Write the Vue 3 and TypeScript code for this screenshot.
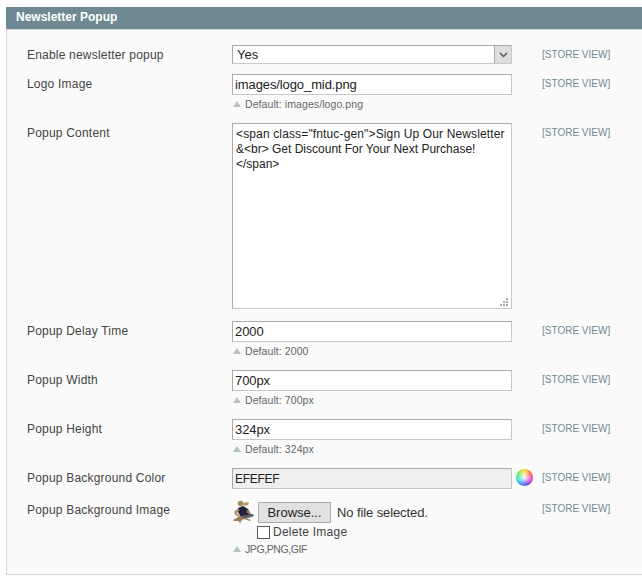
<template>
  <div class="page">
    <section class="panel">
      <h2 class="panel-head">Newsletter Popup</h2>
      <div class="panel-body">
        <div v-for="row in rows" :key="row.label" class="row">
          <label class="row-label">{{ row.label }}</label>
          <div class="row-value">
            <div v-if="row.kind === 'select'" class="select">
              <span>{{ row.value }}</span>
              <span class="select-arrow">
                <svg width="9" height="6" viewBox="0 0 9 6"><path d="M1 1l3.5 3.5L8 1" fill="none" stroke="#555" stroke-width="1.5" /></svg>
              </span>
            </div>
            <div v-else-if="row.kind === 'area'" class="textarea">
              <div class="first-line">&lt;span class="fntuc-gen"&gt;Sign Up Our Newsletter</div>
              <div>&amp;&lt;br&gt; Get Discount For Your Next Purchase!</div>
              <div>&lt;/span&gt;</div>
              <svg class="grip" width="9" height="9" viewBox="0 0 9 9" fill="#aaa">
                <rect x="6" y="0" width="2" height="2" /><rect x="3" y="3" width="2" height="2" /><rect x="6" y="3" width="2" height="2" />
                <rect x="0" y="6" width="2" height="2" /><rect x="3" y="6" width="2" height="2" /><rect x="6" y="6" width="2" height="2" />
              </svg>
            </div>
            <div v-else-if="row.kind === 'color'" class="color-line">
              <div class="input input-grey">{{ row.value }}</div>
              <span class="wheel"></span>
            </div>
            <div v-else-if="row.kind === 'file'" class="file">
              <div class="file-line">
                <svg class="thumb" width="23" height="24" viewBox="0 0 23 24">
                  <path d="M11 3l5-1 1 1-1 2-4 1z" fill="#b89a72" />
                  <circle cx="8.5" cy="3.5" r="2.8" fill="#a98b63" />
                  <path d="M6 8l5-2 5 3 2 6-9 2-3-5z" fill="#1f2338" />
                  <path d="M6 8L2 12l1 3 4 2 1-1.5-3-2.5 2.5-3z" fill="#b89a72" />
                  <path d="M16 9l3 5 2 1-2 1-5-4z" fill="#8a7355" />
                  <path d="M8 16l13-2 1 2-9 3z" fill="#5a5d68" />
                  <path d="M1 20l7-4 5 2 6 2-1 1-6-2-3 2-1 3-1-3-5 0z" fill="#9a7c56" />
                </svg>
                <button class="browse" type="button">Browse...</button>
                <span class="no-file">No file selected.</span>
              </div>
              <div class="delete-line"><span class="check"></span>Delete Image</div>
            </div>
            <div v-else class="input">{{ row.value }}</div>
            <p v-if="row.note" class="note" :class="{ 'note-types': row.kind === 'file' }"><span class="tri"></span>{{ row.note }}</p>
          </div>
          <span class="scope" :class="{ 'scope-file': row.kind === 'file' }">[STORE VIEW]</span>
        </div>
      </div>
    </section>
  </div>
</template>

<script setup lang="ts">
type Row = {
  label: string;
  kind: 'select' | 'text' | 'area' | 'color' | 'file';
  value?: string;
  note?: string;
};

const rows: Row[] = [
  { label: 'Enable newsletter popup', kind: 'select', value: 'Yes' },
  { label: 'Logo Image', kind: 'text', value: 'images/logo_mid.png', note: 'Default: images/logo.png' },
  { label: 'Popup Content', kind: 'area' },
  { label: 'Popup Delay Time', kind: 'text', value: '2000', note: 'Default: 2000' },
  { label: 'Popup Width', kind: 'text', value: '700px', note: 'Default: 700px' },
  { label: 'Popup Height', kind: 'text', value: '324px', note: 'Default: 324px' },
  { label: 'Popup Background Color', kind: 'color', value: 'EFEFEF' },
  { label: 'Popup Background Image', kind: 'file', note: 'JPG,PNG,GIF' },
];
</script>

<style>
html, body { background: #fff; }
</style>

<style scoped>
.page {
  padding: 7px 0 0 6px;
  font-family: "Liberation Sans", Arial, sans-serif;
  font-size: 12px;
  color: #444;
  height: 575px;
  overflow: hidden;
}
.panel { width: 640px; }
.panel-head {
  margin: 0;
  height: 22px;
  line-height: 21px;
  padding-left: 10px;
  background: #6f8992;
  color: #fff;
  font-size: 12px;
  font-weight: bold;
  border-bottom: 1px solid #d6d6d6;
}
.panel-body {
  background: #fafafa;
  border-left: 1px solid #d6d6d6;
  border-bottom: 1px solid #d6d6d6;
  padding: 15px 0 0 20px;
  height: 529px;
}
.row {
  display: grid;
  grid-template-columns: 205px 280px 1fr;
  margin-bottom: 10px;
}
.row-label { line-height: 16px; padding-top: 2px; letter-spacing: 0.2px; }
.scope {
  margin-left: 30px;
  font-size: 10px;
  color: #6f8992;
  line-height: 14px;
  padding-top: 3px;
}
.scope-file { padding-top: 2px; }
.input, .select, .textarea {
  box-sizing: border-box;
  width: 280px;
  background: #fff;
  border: 1px solid #c8c8c8;
  border-top-color: #aaa;
  border-left-color: #aaa;
  color: #222;
}
.input { height: 21px; line-height: 20px; padding-left: 2px; font-size: 13px; letter-spacing: -0.1px; }
.input-grey { background: #efefef; font-size: 12px; letter-spacing: -0.3px; }
.select {
  height: 19px;
  line-height: 17px;
  padding-left: 4px;
  position: relative;
  font-size: 13px;
}
.select-arrow {
  position: absolute;
  right: 0;
  top: 0;
  box-sizing: border-box;
  width: 17px;
  height: 17px;
  background: #dedede;
  border-left: 1px solid #aaa;
  display: flex;
  align-items: center;
  justify-content: center;
}
.textarea {
  height: 186px;
  padding: 3px;
  line-height: 15px;
  position: relative;
  margin-bottom: 2px;
  font-size: 12px;
}
.first-line { letter-spacing: 0.14px; }
.grip { position: absolute; right: 2px; bottom: 1px; }
.note {
  margin: 2px 0 2px;
  font-size: 10.5px;
  line-height: 14px;
  letter-spacing: 0.08px;
  color: #666;
  display: flex;
  align-items: center;
  height: 14px;
}
.note-types { letter-spacing: -0.4px; }
.tri {
  width: 0;
  height: 0;
  margin: 0 4px 0 1px;
  border-left: 4px solid transparent;
  border-right: 4px solid transparent;
  border-bottom: 6px solid #b4c2c6;
}
.color-line { position: relative; height: 21px; margin-bottom: 1px; }
.wheel {
  position: absolute;
  left: 284px;
  top: 1px;
  width: 17px;
  height: 17px;
  border-radius: 50%;
  background:
    radial-gradient(circle, rgba(255,255,255,0.95) 0, rgba(255,255,255,0.5) 35%, rgba(255,255,255,0) 70%),
    conic-gradient(#ffd92a, #ff5a3a, #f02ad0, #6a2be0, #2a7cf0, #2ae0d0, #5cf03c, #ffd92a);
}
.file-line { display: flex; align-items: center; height: 24px; }
.thumb { margin-right: 3px; flex: none; }
.browse {
  box-sizing: border-box;
  width: 73px;
  height: 21px;
  padding: 0;
  font: 13px "Liberation Sans", Arial, sans-serif;
  color: #222;
  background: #e1e1e1;
  border: 1px solid #adadad;
  margin-right: 6px;
}
.no-file { color: #333; font-size: 13px; letter-spacing: -0.1px; }
.delete-line {
  display: flex;
  align-items: center;
  height: 16px;
  margin-left: 25px;
  color: #444;
  gap: 3px;
  letter-spacing: 0.25px;
}
.check {
  box-sizing: border-box;
  width: 13px;
  height: 13px;
  background: #fff;
  border: 1px solid #555;
}
</style>
